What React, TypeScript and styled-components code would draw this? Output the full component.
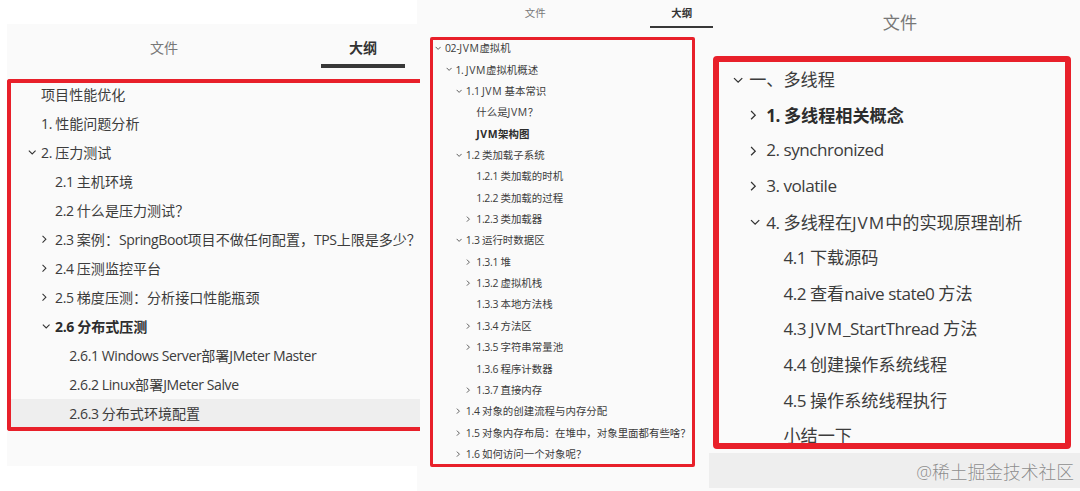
import styled, { createGlobalStyle, css } from 'styled-components';

type Item = {
  text: string;
  level: number;
  arrow?: 'down' | 'right';
  bold?: boolean;
  active?: boolean;
};

const performance: Item[] = [
  { text: '项目性能优化', level: 0 },
  { text: '1. 性能问题分析', level: 0 },
  { text: '2. 压力测试', level: 0, arrow: 'down' },
  { text: '2.1 主机环境', level: 1 },
  { text: '2.2 什么是压力测试？', level: 1 },
  { text: '2.3 案例：SpringBoot项目不做任何配置，TPS上限是多少？', level: 1, arrow: 'right' },
  { text: '2.4 压测监控平台', level: 1, arrow: 'right' },
  { text: '2.5 梯度压测：分析接口性能瓶颈', level: 1, arrow: 'right' },
  { text: '2.6 分布式压测', level: 1, arrow: 'down', bold: true },
  { text: '2.6.1 Windows Server部署JMeter Master', level: 2 },
  { text: '2.6.2 Linux部署JMeter Salve', level: 2 },
  { text: '2.6.3 分布式环境配置', level: 2, active: true },
];

const jvm: Item[] = [
  { text: '02-JVM虚拟机', level: 0, arrow: 'down' },
  { text: '1. JVM虚拟机概述', level: 1, arrow: 'down' },
  { text: '1.1 JVM 基本常识', level: 2, arrow: 'down' },
  { text: '什么是JVM？', level: 3 },
  { text: 'JVM架构图', level: 3, bold: true },
  { text: '1.2 类加载子系统', level: 2, arrow: 'down' },
  { text: '1.2.1 类加载的时机', level: 3 },
  { text: '1.2.2 类加载的过程', level: 3 },
  { text: '1.2.3 类加载器', level: 3, arrow: 'right' },
  { text: '1.3 运行时数据区', level: 2, arrow: 'down' },
  { text: '1.3.1 堆', level: 3, arrow: 'right' },
  { text: '1.3.2 虚拟机栈', level: 3, arrow: 'right' },
  { text: '1.3.3 本地方法栈', level: 3 },
  { text: '1.3.4 方法区', level: 3, arrow: 'right' },
  { text: '1.3.5 字符串常量池', level: 3, arrow: 'right' },
  { text: '1.3.6 程序计数器', level: 3 },
  { text: '1.3.7 直接内存', level: 3, arrow: 'right' },
  { text: '1.4 对象的创建流程与内存分配', level: 2, arrow: 'right' },
  { text: '1.5 对象内存布局：在堆中，对象里面都有些啥？', level: 2, arrow: 'right' },
  { text: '1.6 如何访问一个对象呢？', level: 2, arrow: 'right' },
];

const threads: Item[] = [
  { text: '一、多线程', level: 0, arrow: 'down' },
  { text: '1. 多线程相关概念', level: 1, arrow: 'right', bold: true },
  { text: '2. synchronized', level: 1, arrow: 'right' },
  { text: '3. volatile', level: 1, arrow: 'right' },
  { text: '4. 多线程在JVM中的实现原理剖析', level: 1, arrow: 'down' },
  { text: '4.1 下载源码', level: 2 },
  { text: '4.2 查看naive state0 方法', level: 2 },
  { text: '4.3 JVM_StartThread 方法', level: 2 },
  { text: '4.4 创建操作系统线程', level: 2 },
  { text: '4.5 操作系统线程执行', level: 2 },
  { text: '小结一下', level: 2 },
];

// latin runs are set a little tighter than the chinese text around them,
// JVM a little wider
const Label = ({ text }: { text: string }) => (
  <Text>
    {text.split(/(JVM|[\x20-\x7e]+?(?=JVM|[^\x20-\x7e]|$))/).map((part, i) =>
      i % 2 ? <Latin key={i} $wide={part === 'JVM'}>{part}</Latin> : part
    )}
  </Text>
);

const Outline = ({ items }: { items: Item[] }) => (
  <List>
    {items.map((item) => (
      <Row key={item.text} $level={item.level} $bold={item.bold} $active={item.active}>
        <Toggle>
          {item.arrow && (
            <Chevron viewBox="0 0 10 10" $dir={item.arrow}>
              <path d={item.arrow === 'down' ? 'M1 3 L5 7 L9 3' : 'M3 1 L7 5 L3 9'} />
            </Chevron>
          )}
        </Toggle>
        <Label text={item.text} />
      </Row>
    ))}
  </List>
);

const App = () => {
  return (
    <>
      <GlobalStyle />
      <Page>
        <LeftColumn>
          <LeftPanel>
            <LeftTabs>
              <Tab>文件</Tab>
              <Tab $active>大纲</Tab>
            </LeftTabs>
            <LeftFrame>
              <Outline items={performance} />
            </LeftFrame>
          </LeftPanel>
        </LeftColumn>

        <MiddleColumn>
          <MiddleTabs>
            <Tab>文件</Tab>
            <Tab $active>大纲</Tab>
          </MiddleTabs>
          <MiddleFrame>
            <Outline items={jvm} />
          </MiddleFrame>
        </MiddleColumn>

        <RightColumn>
          <RightTabs>
            <Tab>文件</Tab>
          </RightTabs>
          <RightFrame>
            <Outline items={threads} />
          </RightFrame>
          <Footer>@稀土掘金技术社区</Footer>
        </RightColumn>
      </Page>
    </>
  );
};

const GlobalStyle = createGlobalStyle`
  body {
    margin: 0;
    background-color: #fff;
    font-family: "Open Sans", "Noto Sans CJK SC", sans-serif;
    color: #3c3c3c;
  }

  * {
    box-sizing: border-box;
  }
`;

const Page = styled.div`
  display: flex;
  width: 1080px;
  height: 491px;
  overflow: hidden;
`;

const LeftColumn = styled.section`
  position: relative;
  z-index: 1;
  flex: 0 0 417px;
  min-width: 0;
  padding: 24px 0 0 7px;
`;

const LeftPanel = styled.div`
  width: 413px;
  height: 442px;
  background-color: #fafafa;
  overflow: hidden;
  font-size: 14.05px;
`;

const MiddleColumn = styled.section`
  flex: 0 0 296px;
  min-width: 0;
  background-color: #fafafa;
  font-size: 10.45px;
`;

const RightColumn = styled.section`
  flex: 1;
  min-width: 0;
  background-color: #fafafa;
  font-size: 17.15px;
`;

const Tabs = styled.div`
  display: flex;
  align-items: flex-start;
`;

const Tab = styled.div<{ $active?: boolean }>`
  display: flex;
  flex: 0 0 auto;
  flex-direction: column;
  align-items: center;
  color: #777;

  ${({ $active }) =>
    $active &&
    css`
      color: #333;
      font-weight: bold;

      &::after {
        content: '';
        width: 6em;
        height: 0.27em;
        background-color: #383838;
      }
    `}
`;

const LeftTabs = styled(Tabs)`
  height: 55px;
  padding: 8px 0 0 57.5px;

  ${Tab} {
    width: 199px;
    line-height: 32px;
  }
`;

const MiddleTabs = styled(Tabs)`
  height: 37px;
  padding: 2px 0 0 45px;

  ${Tab} {
    width: 146.5px;
    line-height: 23.5px;
  }
`;

const RightTabs = styled(Tabs)`
  justify-content: center;
  height: 56px;
  padding: 3px 0 0 7px;

  ${Tab} {
    line-height: 40px;
  }
`;

const Frame = styled.div`
  border: 4px solid #e8202a;
  border-radius: 3px;
  overflow: hidden;
`;

const List = styled.ul`
  list-style: none;
  margin: 0;
  padding: 0;
`;

const Row = styled.li<{ $level: number; $bold?: boolean; $active?: boolean }>`
  display: flex;
  align-items: center;
  padding-left: ${({ $level }) => $level}em;
  white-space: nowrap;
  font-weight: ${({ $bold }) => ($bold ? 'bold' : 'normal')};
  color: ${({ $bold }) => ($bold ? '#2c2c2c' : '#3c3c3c')};
  background-color: ${({ $active }) => ($active ? '#eeeeee' : 'transparent')};
`;

const LeftFrame = styled(Frame)`
  height: 352px;
  border-right: none;
  border-radius: 3px 0 0 3px;

  ${List} {
    margin-top: -4px;
  }

  ${Row} {
    height: 29.05px;
    border-left: 16px solid transparent;
  }
`;

const MiddleFrame = styled(Frame)`
  width: 265px;
  height: 430px;
  margin-left: 13px;
  border-width: 3px;
  border-radius: 2px;

  ${List} {
    margin-top: -3px;
    padding-left: 1.5px;
  }

  ${Row} {
    height: 21.37px;
  }
`;

const RightFrame = styled(Frame)`
  width: 358px;
  height: 393px;
  border-width: 6px;
  border-radius: 4px;

  ${List} {
    margin-top: -1px;
    padding-left: 13px;
  }

  ${Row} {
    height: 35.6px;
  }
`;

const Toggle = styled.span`
  display: flex;
  flex: 0 0 1em;
`;

const Chevron = styled.svg<{ $dir: 'down' | 'right' }>`
  width: 0.6em;
  height: 0.6em;
  margin-top: 0.1em;
  margin-left: ${({ $dir }) => ($dir === 'down' ? '0.06em' : '-0.06em')};
  fill: none;
  stroke: #333;
  stroke-width: 1.25;
`;

const Text = styled.span`
  white-space: pre;
`;

const Latin = styled.span<{ $wide?: boolean }>`
  font-kerning: none;
  letter-spacing: ${({ $wide }) => ($wide ? '0.055em' : '-0.03em')};
`;

const Footer = styled.div`
  display: flex;
  align-items: center;
  justify-content: flex-end;
  height: 35px;
  margin: 4px 0 0 -4px;
  padding-right: 6px;
  background-color: #eee;
  color: #8c8c8c;
  font-size: 17.75px;
  font-weight: 300;
  text-shadow: 0 0 1px #fff;
`;

export default App;
